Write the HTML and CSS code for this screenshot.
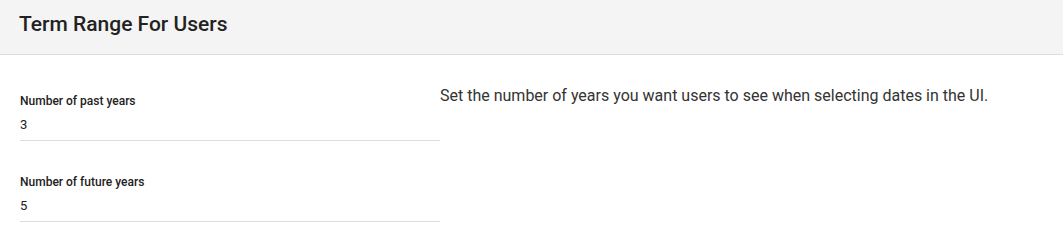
FILE: index.html
```html
<!DOCTYPE html>
<html lang="en">
<head>
  <meta charset="UTF-8">
  <meta name="viewport" content="width=device-width, initial-scale=1.0">
  <title>Term Range For Users</title>
  <link rel="stylesheet" href="styles.css">
</head>
<body>
  <div class="header">
    <h1>Term Range For Users</h1>
  </div>
  <div class="content">
    <div class="fields">
      <div class="field">
        <label for="past">Number of past years</label>
        <input type="text" id="past" value="3">
      </div>
      <div class="field">
        <label for="future">Number of future years</label>
        <input type="text" id="future" value="5">
      </div>
    </div>
    <p class="help">Set the number of years you want users to see when selecting dates in the UI.</p>
  </div>
</body>
</html>
```

FILE: styles.css
```css
body {
  margin: 0;
  font-family: Roboto, "Noto Sans", sans-serif;
  color: #222;
  background: #fff;
}
.header {
  height: 54px;
  background-color: #f4f4f4;
  border-bottom: 1px solid #dcdcdc;
  padding: 0 19px;
  display: flex;
  align-items: center;
}
.header h1 {
  margin: 0;
  font-size: 21px;
  font-weight: 500;
  color: #222;
  position: relative;
  top: -3px;
}
.content {
  display: flex;
  padding: 0 20px;
}
.fields {
  width: 420px;
  padding-top: 38px;
}
.field {
  border-bottom: 1px solid #ddd;
  padding-bottom: 6px;
  margin-bottom: 33px;
}
.field:last-child {
  margin-bottom: 0;
}
.field label {
  display: block;
  font-size: 12px;
  font-weight: 500;
  color: #222;
  line-height: 16px;
}
.field input {
  display: block;
  width: 100%;
  border: none;
  padding: 0;
  margin-top: 7px;
  font-family: inherit;
  font-size: 13px;
  line-height: 18px;
  color: #222;
  background: transparent;
  outline: none;
}
.help {
  margin: 31px 0 0 0;
  font-size: 16px;
  color: #333;
  line-height: 20px;
}
```
